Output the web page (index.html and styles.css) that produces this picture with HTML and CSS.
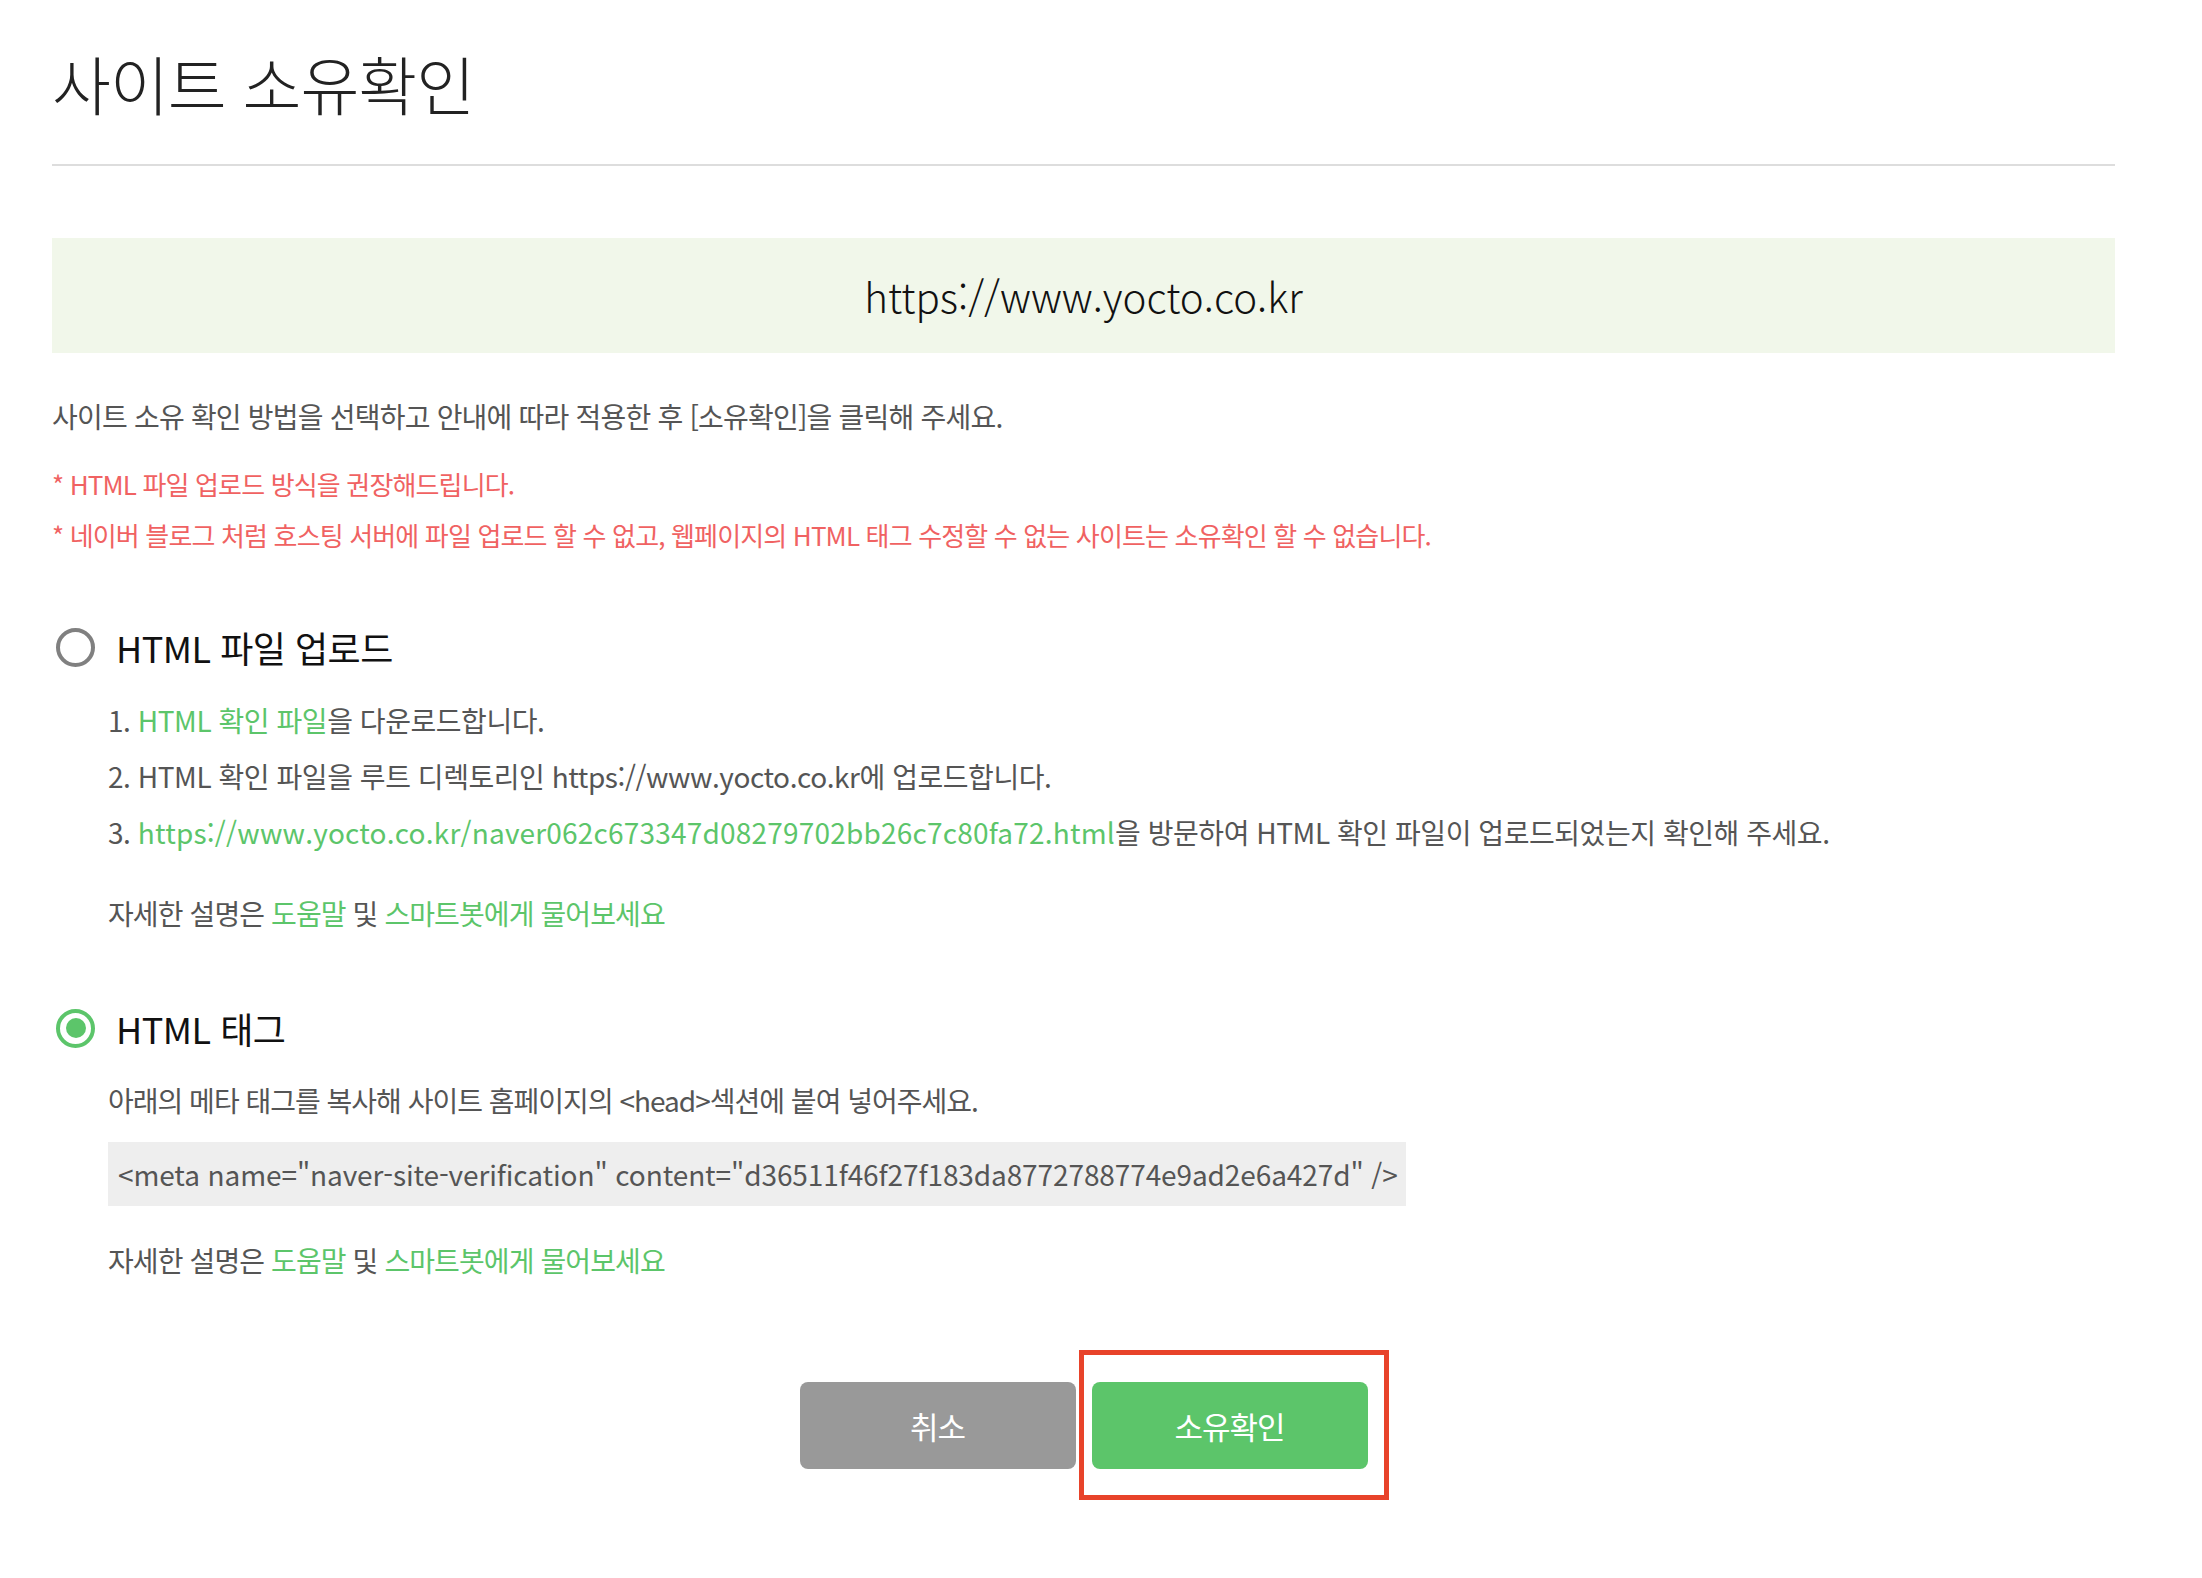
FILE: index.html
```html
<!DOCTYPE html>
<html lang="ko">
<head>
<meta charset="utf-8">
<title>사이트 소유확인</title>
<link rel="stylesheet" href="styles.css">
</head>
<body>
<div class="page">
  <h1 class="title">사이트 소유확인</h1>

  <div class="site-box">https://www.yocto.co.kr</div>

  <p class="guide">사이트 소유 확인 방법을 선택하고 안내에 따라 적용한 후 [소유확인]을 클릭해 주세요.</p>

  <ul class="notes">
    <li>* HTML 파일 업로드 방식을 권장해드립니다.</li>
    <li>* 네이버 블로그 처럼 호스팅 서버에 파일 업로드 할 수 없고, 웹페이지의 HTML 태그 수정할 수 없는 사이트는 소유확인 할 수 없습니다.</li>
  </ul>

  <section class="method method-file">
    <div class="method-head"><span class="radio"></span><span class="method-name">HTML 파일 업로드</span></div>
    <ol class="steps">
      <li>1. <a class="link" href="#">HTML 확인 파일</a>을 다운로드합니다.</li>
      <li>2. HTML 확인 파일을 루트 디렉토리인 https://www.yocto.co.kr에 업로드합니다.</li>
      <li>3. <a class="link link-url" href="#">https://www.yocto.co.kr/naver062c673347d08279702bb26c7c80fa72.html</a>을 방문하여 HTML 확인 파일이 업로드되었는지 확인해 주세요.</li>
    </ol>
    <p class="help">자세한 설명은 <a class="link" href="#">도움말</a> 및 <a class="link" href="#">스마트봇에게 물어보세요</a></p>
  </section>

  <section class="method method-tag">
    <div class="method-head"><span class="radio radio-on"></span><span class="method-name">HTML 태그</span></div>
    <p class="desc">아래의 메타 태그를 복사해 사이트 홈페이지의 &lt;head&gt;섹션에 붙여 넣어주세요.</p>
    <div class="code">&lt;meta name="naver-site-verification" content="d36511f46f27f183da8772788774e9ad2e6a427d" /&gt;</div>
    <p class="help help-tag">자세한 설명은 <a class="link" href="#">도움말</a> 및 <a class="link" href="#">스마트봇에게 물어보세요</a></p>
  </section>

  <div class="actions">
    <button class="btn btn-cancel" type="button">취소</button>
    <span class="confirm-wrap">
      <button class="btn btn-ok" type="button">소유확인</button>
      <span class="highlight"></span>
    </span>
  </div>
</div>
</body>
</html>
```

FILE: styles.css
```css
* { box-sizing: border-box; }

html, body {
  margin: 0;
  padding: 0;
  background: #fff;
}

body {
  font-family: "Noto Sans CJK KR", "Noto Sans", sans-serif;
  color: #555;
}

.page {
  margin-left: 52px;
  width: 2063px;
  padding-bottom: 80px;
}

.title {
  margin: 0;
  padding: 42px 0;
  line-height: 80px;
  font-size: 64px;
  font-weight: 300;
  letter-spacing: -1px;
  color: #222;
  border-bottom: 2px solid #dddddd;
}

.site-box {
  margin-top: 72px;
  height: 115px;
  line-height: 115px;
  background: #f1f7ea;
  text-align: center;
  font-size: 40.3px;
  font-weight: 300;
  color: #111;
}

.guide {
  margin: 43px 0 0;
  line-height: 40px;
  font-size: 28px;
  letter-spacing: -0.8px;
  color: #555;
}

.notes {
  list-style: none;
  margin: 28px 0 0;
  padding: 0;
  display: flex;
  flex-direction: column;
  gap: 11px;
}

.notes li {
  line-height: 40px;
  font-size: 26px;
  letter-spacing: -0.85px;
  color: #f06262;
}

.method-head {
  display: flex;
  align-items: center;
  height: 40px;
  gap: 21px;
  margin-left: 4px;
}

.method-file .method-head { margin-top: 72px; }
.method-tag .method-head { margin-top: 75px; }

.radio {
  width: 39px;
  height: 39px;
  border-radius: 50%;
  border: 4px solid #808080;
  display: flex;
  align-items: center;
  justify-content: center;
  flex: none;
}

.radio-on { border-color: #5cc56a; }

.radio-on::after {
  content: "";
  width: 20px;
  height: 20px;
  border-radius: 50%;
  background: #5cc56a;
}

.method-name {
  font-size: 36px;
  letter-spacing: -0.5px;
  color: #111;
}

.steps {
  list-style: none;
  margin: 25px 0 0 56px;
  padding: 0;
}

.steps li {
  line-height: 56px;
  font-size: 28px;
  letter-spacing: -0.45px;
  color: #555;
}

.link {
  color: #5cc56a;
  text-decoration: none;
}

.steps .link-url { letter-spacing: 0.2px; }

.help {
  margin: 33px 0 0 56px;
  line-height: 40px;
  font-size: 28px;
  letter-spacing: -0.9px;
  color: #555;
}

.help-tag { margin-top: 34px; }

.desc {
  margin: 32px 0 0 56px;
  line-height: 40px;
  font-size: 28px;
  letter-spacing: -1px;
  color: #555;
}

.code {
  display: inline-block;
  margin: 22px 0 0 56px;
  height: 64px;
  line-height: 64px;
  padding: 0 8px 0 10px;
  background: #eeeeee;
  font-size: 28px;
  letter-spacing: -0.1px;
  color: #555;
}

.actions {
  margin-top: 102px;
  display: flex;
  justify-content: center;
  gap: 16px;
}

.btn {
  width: 276px;
  height: 87px;
  border: 0;
  border-radius: 8px;
  font-family: "Noto Sans CJK KR", sans-serif;
  font-size: 31px;
  letter-spacing: -1px;
  color: #fff;
  cursor: pointer;
}

.btn-cancel { background: #999999; }
.btn-ok { background: #5cc56a; }

.confirm-wrap {
  position: relative;
  display: block;
}

.highlight {
  position: absolute;
  left: -13px;
  top: -32px;
  right: -21px;
  bottom: -31px;
  border: 5px solid #e8432a;
  pointer-events: none;
}
```
